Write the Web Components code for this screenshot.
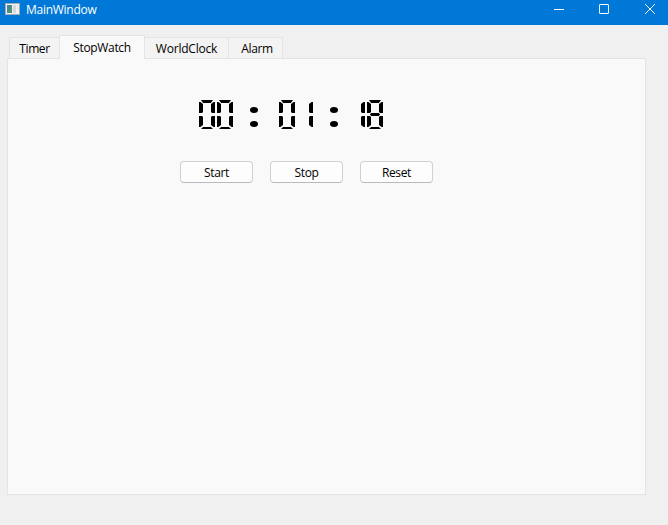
<!DOCTYPE html>
<html lang="en"><head><meta charset="utf-8"><title>MainWindow</title>
<style>
html,body{margin:0;height:100%;overflow:hidden}
body{font:12px/16px "Open Sans","Noto Sans",sans-serif;color:#000;background:#f0f0f0}
</style></head><body>
<main-window></main-window>
<script>
const define=(name,html,after)=>customElements.define(name,class extends HTMLElement{
  constructor(){super();this.attachShadow({mode:'open'}).innerHTML=html}
  connectedCallback(){if(after)after(this,this.shadowRoot)}
});
define('title-bar',`<style>
:host{display:flex;height:25px;box-sizing:border-box;background:#0078d7;color:#fff;padding-left:5px}
.icon{margin-top:3px;width:15px;height:12px;flex:none}
.t{margin:2px 0 0 6px;flex:1;letter-spacing:-.27px;white-space:nowrap}
.c{display:flex;gap:35px;padding:4px 13px 0 0}.c svg{width:10px;height:10px;fill:none;stroke:#fff;overflow:visible}
</style>
<svg class="icon" viewBox="0 0 15 12"><defs><linearGradient id="g" x2="1" y2="1"><stop stop-color="#4a7ba0"/><stop offset="1" stop-color="#4f9a70"/></linearGradient></defs><path fill="#a4abb0" d="M0 0h15v12H0z"/><path fill="#f2f2f2" d="M1 1h13v10H1z"/><path fill="url(#g)" d="M2 2h5v8H2z"/><path fill="#d5d8da" d="M8 2h3v8H8z"/><path fill="#e6e8e9" d="M12 2h1.500v4H12z"/></svg>
<span class="t"><slot></slot></span>
<div class="c"><svg viewBox="0 0 10 10"><path d="M0 5.500h10"/></svg><svg viewBox="0 0 10 10"><rect x=".5" y=".5" width="9" height="9" rx=".4"/></svg><svg viewBox="0 0 10 10" style="margin-left:1px"><path d="M0 0l10 10M10 0L0 10"/></svg></div>`);
define('tab-item',`<style>
:host{display:block;box-sizing:border-box;height:21px;background:#f3f3f3;border:1px solid #e4e4e4;border-left-width:0;border-bottom:0;padding-top:3px;text-align:center;white-space:nowrap}
:host([first]){border-left-width:1px}
:host([active]){height:24px;background:#f9f9f9;padding-top:4px;margin-bottom:-1px;margin-left:-1px;border-left-width:1px;position:relative}
</style><slot></slot>`);
define('push-button',`<style>
:host{display:block;letter-spacing:-.35px}button{display:block;width:73px;height:22px;box-sizing:border-box;border:1px solid #d0d0d0;border-bottom-color:#bababa;border-radius:4px;background:#fdfdfd;color:#000;font:inherit;padding:1px 0 0;text-align:center;letter-spacing:inherit;line-height:19px}
</style><button><slot></slot></button>`);
const ON={0:'abcdef',1:'bc',8:'abcdefg'};
define('lcd-digit',`<style>
:host{display:grid;width:16px;height:30px;flex:none;grid-template:repeat(30,1px)/repeat(16,1px)}
:host([narrow]){width:4px;grid-template-columns:repeat(4,1px)}
i{background:#000;visibility:hidden}i.on{visibility:visible}
.a{grid-area:1/3/4/15;clip-path:polygon(0 0,100% 0,82% 100%,18% 100%)}
.d{grid-area:28/3/30/15;clip-path:polygon(18% 0,82% 0,100% 100%,0 100%)}
.g{grid-area:14/4/17/14;clip-path:polygon(0 50%,12% 0,88% 0,100% 50%,88% 100%,12% 100%)}
.f{grid-area:3/1/14/5;clip-path:polygon(0 0,35% 0,100% 18%,100% 90%,75% 100%,0 100%)}
.e{grid-area:17/1/28/5;clip-path:polygon(0 0,75% 0,100% 10%,100% 82%,35% 100%,0 100%)}
.b{grid-area:3/13/14/17;clip-path:polygon(100% 0,65% 0,0 18%,0 90%,25% 100%,100% 100%)}
.c{grid-area:17/13/28/17;clip-path:polygon(100% 0,25% 0,0 10%,0 82%,65% 100%,100% 100%)}
:host([narrow]) .b{grid-column:1/5}:host([narrow]) .c{grid-column:1/5}
:host([narrow]) i:not(.on){display:none}
</style>`+[...'abcdefg'].map(s=>`<i class="${s}"></i>`).join(''),(h,r)=>{for(const s of ON[h.getAttribute('value')])r.querySelector('.'+s).classList.add('on')});
define('lcd-colon',`<style>:host{display:flex;flex-direction:column;gap:8px;padding-top:7px;width:8px;flex:none}i{width:8px;height:6px;border-radius:50%;background:#000}</style><i></i><i></i>`);
define('lcd-time',`<style>:host{display:flex;height:30px}</style>
<lcd-digit value="0"></lcd-digit><lcd-digit value="0" style="margin-left:2px"></lcd-digit>
<lcd-colon style="margin-left:17px"></lcd-colon>
<lcd-digit value="0" style="margin-left:21px"></lcd-digit><lcd-digit value="1" narrow style="margin-left:14px"></lcd-digit>
<lcd-colon style="margin-left:17px"></lcd-colon>
<lcd-digit value="1" narrow style="margin-left:23px"></lcd-digit><lcd-digit value="8" style="margin-left:2px"></lcd-digit>`);
define('main-window',`<style>
:host{display:block;height:525px;background:#f0f0f0}
.tabs{display:flex;align-items:flex-end;height:23px;padding:10px 0 0 9px}
.page{box-sizing:border-box;width:639px;height:437px;margin-left:7px;border:1px solid #e4e4e4;background:#f9f9f9;padding-top:41px}
lcd-time{margin-left:191px}.b{display:flex;gap:17px;margin:31px 0 0 172px}
</style><title-bar>MainWindow</title-bar>
<div class="tabs"><tab-item first style="width:51px;letter-spacing:-.4px">Timer</tab-item><tab-item active style="width:86px;letter-spacing:-.33px">StopWatch</tab-item><tab-item style="width:84px;letter-spacing:-.2px">WorldClock</tab-item><tab-item style="width:54px;padding-left:3px;letter-spacing:-.35px">Alarm</tab-item></div>
<div class="page"><lcd-time role="timer" aria-label="00 : 01 : 18"></lcd-time>
<div class="b"><push-button>Start</push-button><push-button>Stop</push-button><push-button>Reset</push-button></div></div>`);
</script></body></html>
